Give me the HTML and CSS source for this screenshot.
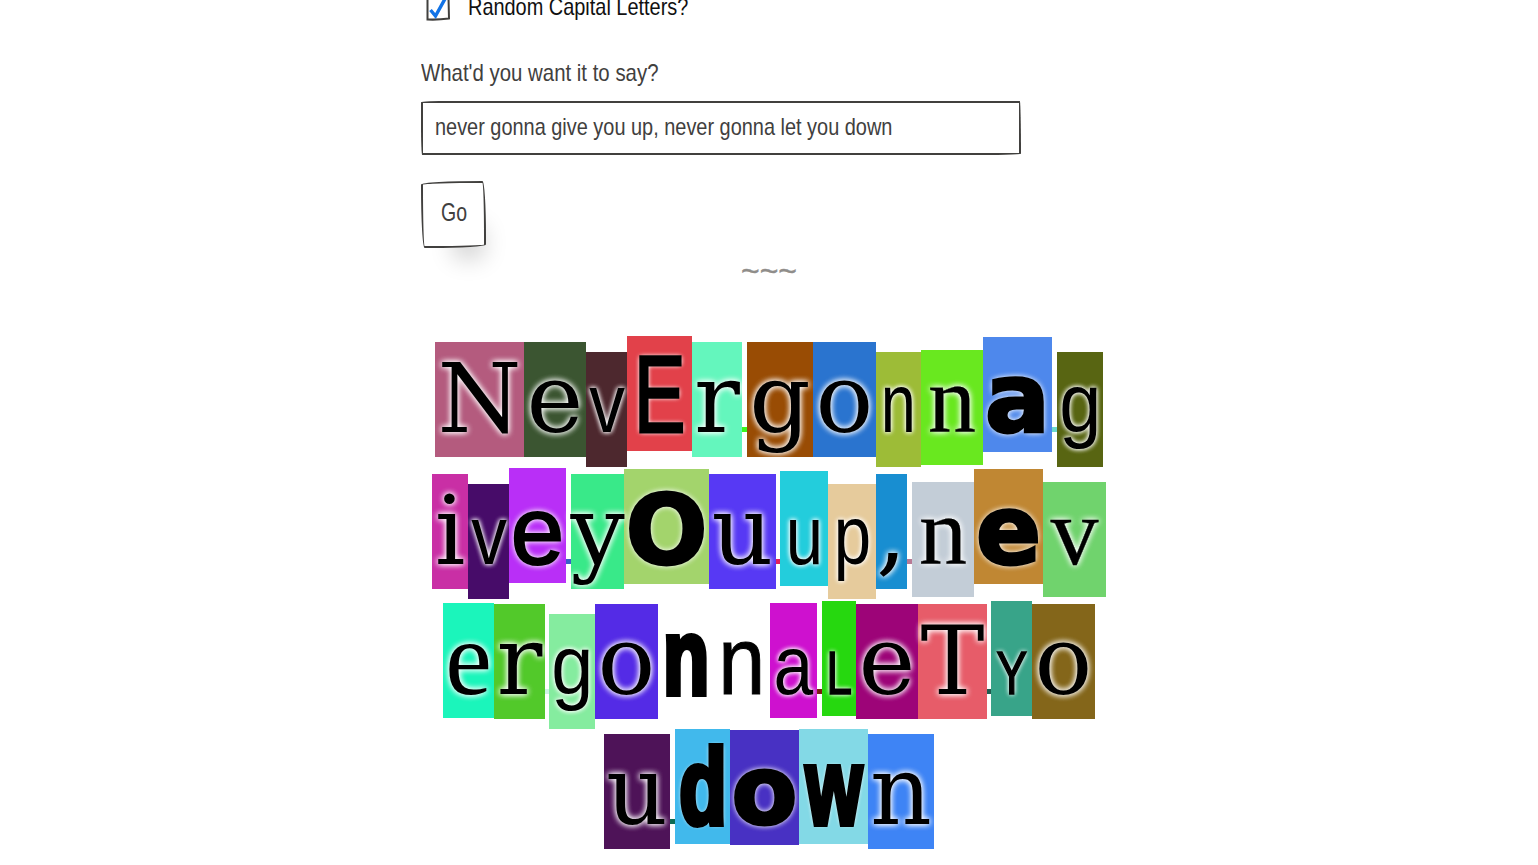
FILE: index.html
```html
<!DOCTYPE html>
<html lang="en">
<head>
<meta charset="utf-8">
<title>Ransom Note Generator</title>
<link rel="stylesheet" href="styles.css">
</head>
<body>
<main class="page">
  <form class="form">
    <label class="check">
      <svg class="check-box" viewBox="0 0 24 24" width="24" height="24"><path class="box" d="M1.5 1 L22.5 0.5 L23 21.5 Q12 23 1.5 22.5 Z"/><path class="tick" d="M4.5 13 L9.5 19 L19.5 1"/></svg>
      <span class="nr">Random Capital Letters?</span>
    </label>
    <label class="prompt" for="say"><span class="nr">What'd you want it to say?</span></label>
    <div class="input" id="say"><span class="nr">never gonna give you up, never gonna let you down</span></div>
    <div class="go"><span class="nr">Go</span></div>
  </form>
  <div class="tilde">~~~</div>
  <section class="note">
    <div class="row">
      <span class="tile dserif" style="background:#b45b7e;width:89px"><i>N</i></span>
      <span class="tile dserif" style="background:#3b5531;width:62px"><i>e</i></span>
      <span class="tile hand" style="background:#4d282e;width:41px;--sx:.85"><i>v</i></span>
      <span class="tile cap" style="background:#e2414a;width:65px;--sx:.7"><i>E</i></span>
      <span class="tile dserif" style="background:#64f6bd;width:50px"><i>r</i></span>
      <span class="sp" style="background:#3cf71f"></span>
      <span class="tile dserif" style="background:#994c04;width:66px"><i>g</i></span>
      <span class="tile dserif" style="background:#2a74cf;width:63px"><i>o</i></span>
      <span class="tile hand" style="background:#9dbc37;width:45px;--sx:.75"><i>n</i></span>
      <span class="tile slab" style="background:#69e81f;width:62px"><i>n</i></span>
      <span class="tile black" style="background:#4e88ec;width:69px"><i>a</i></span>
      <span class="sp" style="background:#6dd9cd"></span>
      <span class="tile hand" style="background:#586512;width:46px;--sx:.9"><i>g</i></span>
    </div>
    <div class="row row-tight">
      <span class="tile dserif" style="background:#c92fa5;width:36px"><i>i</i></span>
      <span class="tile hand" style="background:#470c69;width:41px;--sx:.85"><i>v</i></span>
      <span class="tile round-e" style="background:#b92ff7;width:57px"><i>e</i></span>
      <span class="sp" style="background:#3a5ec9"></span>
      <span class="tile dserif" style="background:#39e989;width:53px"><i>y</i></span>
      <span class="tile black" style="background:#a3d46c;width:85px"><i>O</i></span>
      <span class="tile dserif" style="background:#5739f4;width:67px"><i>u</i></span>
      <span class="sp sp-thin" style="background:#e31f5e"></span>
      <span class="tile mid" style="background:#23cddc;width:48px;--sx:.8"><i>u</i></span>
      <span class="tile hand" style="background:#e6cb9c;width:48px;--sx:.8"><i>p</i></span>
      <span class="tile dserif" style="background:#188ed1;width:31px"><i>,</i></span>
      <span class="sp" style="background:#b87a95"></span>
      <span class="tile slab" style="background:#c3cdd7;width:62px"><i>n</i></span>
      <span class="tile black" style="background:#c08733;width:69px"><i>e</i></span>
      <span class="tile slab" style="background:#70d36d;width:63px"><i>v</i></span>
    </div>
    <div class="row row-gap">
      <span class="tile lserif" style="background:#1bf5bb;width:51px"><i>e</i></span>
      <span class="tile dserif" style="background:#52c92a;width:51px"><i>r</i></span>
      <span class="sp sp-thin" style="background:#cff5e5"></span>
      <span class="tile hand" style="background:#85ec9f;width:46px;--sx:.9"><i>g</i></span>
      <span class="tile dserif" style="background:#542be6;width:63px"><i>o</i></span>
      <span class="tile fat" style="width:56px;--sx:.7"><i>n</i></span>
      <span class="tile sans" style="width:56px;--sx:.88"><i>n</i></span>
      <span class="tile hand low" style="background:#ce11cf;width:47px;--sx:.85"><i>a</i></span>
      <span class="sp" style="background:#7a1a10"></span>
      <span class="tile small" style="background:#26d80f;width:34px;--sx:.75"><i>L</i></span>
      <span class="tile dserif" style="background:#9d0478;width:62px"><i>e</i></span>
      <span class="tile dserif" style="background:#e75c69;width:69px"><i>T</i></span>
      <span class="sp sp-thin" style="background:#1f5c50"></span>
      <span class="tile small" style="background:#38a489;width:41px;--sx:.75"><i>Y</i></span>
      <span class="tile dserif" style="background:#84661a;width:63px"><i>o</i></span>
    </div>
    <div class="row">
      <span class="tile dserif" style="background:#4e1358;width:66px"><i>u</i></span>
      <span class="sp" style="background:#0e6b54"></span>
      <span class="tile fat tall" style="background:#41b9ec;width:55px;--sx:.72"><i>d</i></span>
      <span class="tile black snug" style="background:#4831c3;width:69px"><i>o</i></span>
      <span class="tile fat tall" style="background:#83d9e6;width:69px;--sx:.67"><i>w</i></span>
      <span class="tile dserif" style="background:#3e84f5;width:66px"><i>n</i></span>
    </div>
  </section>
</main>
</body>
</html>
```
FILE: styles.css
```css
html, body { margin: 0; padding: 0; overflow: hidden; height: 100%; background: #fff; }
body { font-family: "Liberation Sans", sans-serif; color: #41403e; }
.page { width: 696px; margin: -8px auto 0; }
.form { display: flex; flex-direction: column; align-items: flex-start; }
.nr { display: inline-block; white-space: nowrap; transform: scaleX(var(--sx, .83)); transform-origin: left center; }
.check { display: flex; align-items: center; gap: 18px; margin-left: 5px; height: 30px; font-size: 24px; color: #111; }
.check-box { flex: none; margin-top: 3px; }
.box { fill: #fff; stroke: #41403e; stroke-width: 2; }
.tick { fill: none; stroke: #1273e6; stroke-width: 3.4; }
.prompt { margin-top: 37px; font-size: 24px; line-height: 28px; --sx: .85; }
.input { box-sizing: border-box; width: 600px; height: 54px; margin-top: 14px; padding: 0 12px; border: 2px solid #41403e; border-radius: 125px 5px 225px 5px / 5px 225px 5px 125px; font-size: 24px; line-height: 48px; color: #41403e; }
.go { box-sizing: border-box; width: 65px; height: 67px; margin-top: 26px; padding-left: 18px; border: 2px solid #41403e; border-radius: 255px 15px 225px 15px / 15px 225px 15px 255px; font-size: 26px; line-height: 58px; box-shadow: 15px 28px 25px -18px rgba(0,0,0,.2); --sx: .75; }
.tilde { margin-top: 8px; height: 80px; text-align: center; font-family: "Liberation Sans", sans-serif; font-size: 32px; line-height: 30px; color: #8f8d8a; -webkit-text-stroke: .4px #8f8d8a; }
.row { display: flex; align-items: baseline; justify-content: center; }
.row-tight { margin-top: 1px; }
.row-gap { margin-top: 2px; }
.tile { display: flex; justify-content: center; flex: none; height: 115px; font-size: 96px; color: #000; text-shadow: 0 0 6px #fff, 0 0 6px #fff; white-space: nowrap; }
.tile i { display: block; flex: none; font-style: normal; transform: scaleX(var(--sx, 1)); }
.sp { display: block; flex: none; width: 5px; height: 5px; }
.sp-thin { width: 4px; }
.dserif { font-family: "DejaVu Serif", serif; line-height: 115px; }
.lserif { font-family: "Liberation Serif", serif; font-size: 105px; line-height: 111px; }
.slab { font-family: "Liberation Serif", serif; line-height: 100px; -webkit-text-stroke: .3px #000; }
.black { font-family: "DejaVu Sans", sans-serif; font-weight: 700; line-height: 125px; -webkit-text-stroke: 3px #000; }
.black.snug { line-height: 123px; }
.hand { font-size: 84px; line-height: 102px; }
.hand.low { line-height: 124px; }
.cap { font-size: 110px; line-height: 116px; -webkit-text-stroke: 3px #000; }
.round-e { line-height: 125px; -webkit-text-stroke: 2px #000; }
.mid { font-size: 84px; line-height: 128px; }
.small { font-size: 62px; line-height: 143px; -webkit-text-stroke: 1.5px #000; }
.sans { line-height: 115px; text-shadow: none; -webkit-text-stroke: 1px #000; }
.fat { font-weight: 700; font-size: 108px; line-height: 110px; -webkit-text-stroke: 6px #000; }
.fat.tall { line-height: 115px; }
```
